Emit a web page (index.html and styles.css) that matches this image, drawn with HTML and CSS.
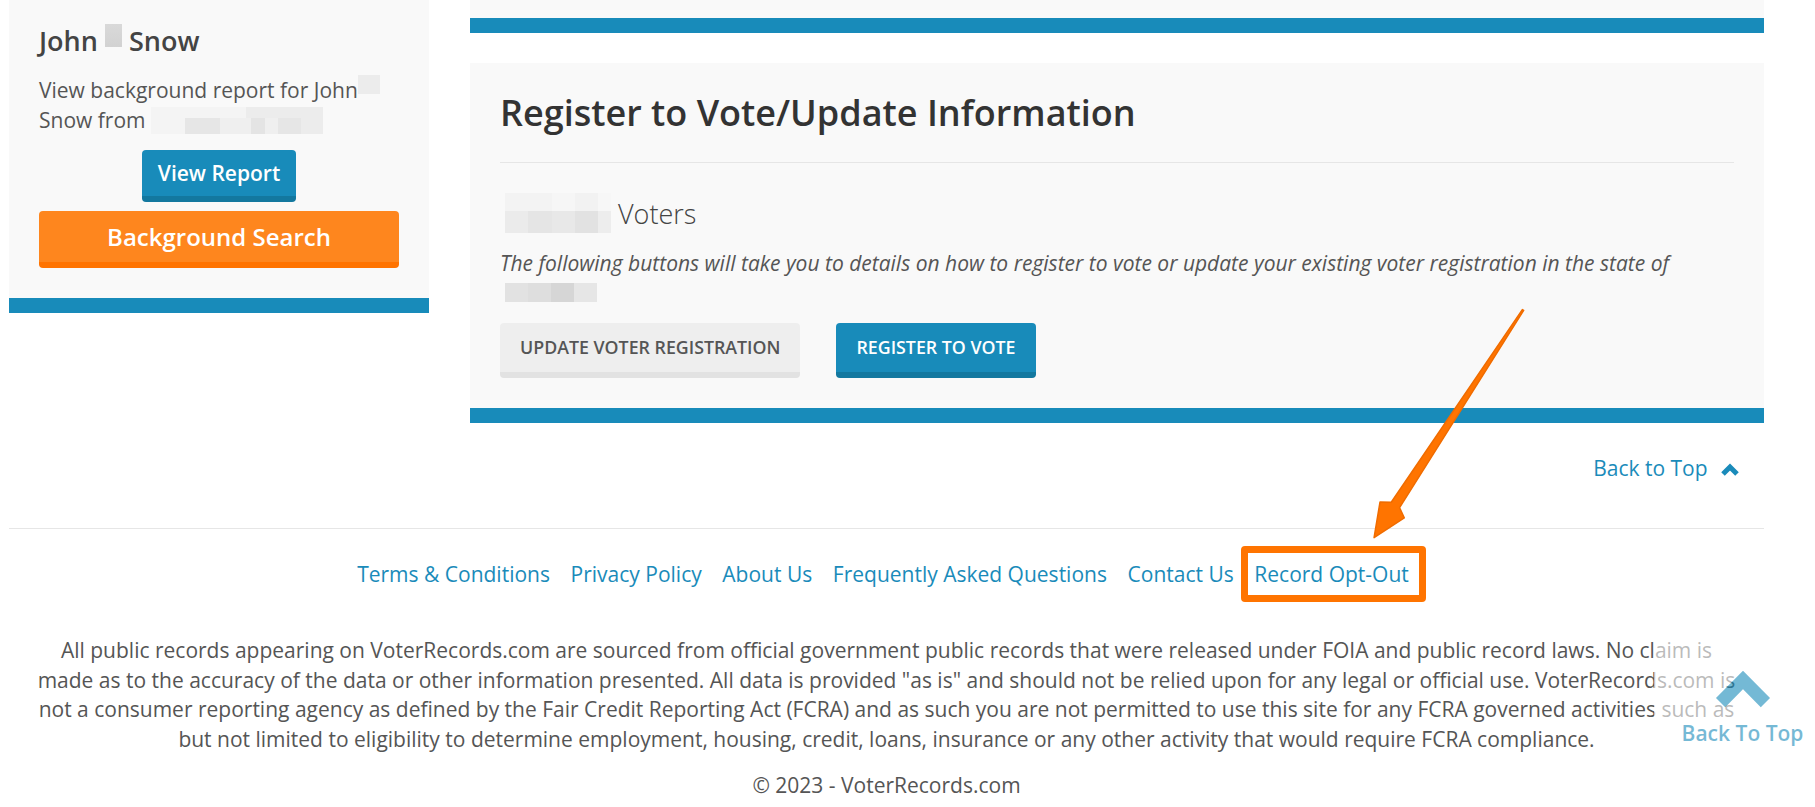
FILE: index.html
```html
<!DOCTYPE html>
<html lang="en">
<head>
  <meta charset="UTF-8">
  <meta name="viewport" content="width=device-width, initial-scale=1.0">
  <title>Register to Vote - VoterRecords.com</title>
  <link rel="stylesheet" href="styles.css">
</head>
<body>

  <div class="page">
    <aside class="side">
      <div class="card side-card">
        <h3 class="name">John <span class="blur blur-mid"></span> Snow</h3>
        <p class="lead">View background report for John<span class="blur blur-sm"></span> Snow from <span class="blur blur-city"></span></p>
        <div class="center"><a href="#" class="btn btn-blue btn-report">View Report</a></div>
        <a href="#" class="btn btn-orange btn-block">Background Search</a>
      </div>
    </aside>

    <main class="main">
      <div class="card card-tail"></div>

      <section class="card register">
        <h2>Register to Vote/Update Information</h2>
        <hr>
        <h4 class="state"><span class="blur blur-state"></span> Voters</h4>
        <p class="note">The following buttons will take you to details on how to register to vote or update your existing voter registration in the state of <span class="blur blur-state2"></span></p>
        <div class="actions">
          <a href="#" class="btn btn-gray">UPDATE VOTER REGISTRATION</a>
          <a href="#" class="btn btn-blue btn-caps">REGISTER TO VOTE</a>
        </div>
      </section>

      <div class="back-row">
        <a href="#" class="back-link">Back to Top
          <svg class="chev-sm" width="18" height="13" viewBox="0 0 18 13"><polyline points="2,11 9,4 16,11" fill="none" stroke="#1a8bba" stroke-width="5"/></svg>
        </a>
      </div>
    </main>
  </div>

  <footer class="footer">
    <ul class="links">
      <li><a href="#">Terms &amp; Conditions</a></li>
      <li><a href="#">Privacy Policy</a></li>
      <li><a href="#">About Us</a></li>
      <li><a href="#">Frequently Asked Questions</a></li>
      <li><a href="#">Contact Us</a></li>
      <li><a href="#" class="marked">Record Opt-Out</a></li>
    </ul>
    <p class="disclaimer">All public records appearing on VoterRecords.com are sourced from official government public records that were released under FOIA and public record laws. No claim is made as to the accuracy of the data or other information presented. All data is provided "as is" and should not be relied upon for any legal or official use. VoterRecords.com is not a consumer reporting agency as defined by the Fair Credit Reporting Act (FCRA) and as such you are not permitted to use this site for any FCRA governed activities such as but not limited to eligibility to determine employment, housing, credit, loans, insurance or any other activity that would require FCRA compliance.</p>
    <p class="copy">&copy; 2023 - VoterRecords.com</p>
  </footer>

  <!-- annotation arrow -->
  <svg class="arrow" width="1815" height="807" viewBox="0 0 1815 807">
    <g transform="translate(1523 310) rotate(123.2)">
      <polygon points="0,-0.8 233,-5 239,-14.5 272,0 239,14.5 233,5 0,0.8" fill="#ff7400" stroke="#f06c00" stroke-width="1.5" stroke-linejoin="round"/>
    </g>
  </svg>

  <a href="#" class="to-top">
    <svg width="60" height="40" viewBox="0 0 60 40"><polyline points="7.6,34.6 30,12 52.4,34.6" fill="none" stroke="#188bba" stroke-width="13"/></svg>
    <span>Back To Top</span>
  </a>

</body>
</html>
```

FILE: styles.css
```css
body {
  margin: 0;
  font-family: 'Open Sans', 'Liberation Sans', sans-serif;
  font-size: 21px;
  line-height: 30px;
  color: #555;
  background-color: #fff;
  position: relative;
}

a {
  color: #1a8bba;
  text-decoration: none;
}

.page {
  width: 1755px;
  margin-left: 9px;
  display: flex;
  gap: 41px;
  align-items: flex-start;
}

.side {
  width: 420px;
  flex: none;
}

.main {
  flex: 1;
}

.card {
  background-color: #f9f9f9;
  border-bottom: 15px solid #188bba;
}

.side-card {
  padding: 24px 30px 30px;
}

.name {
  font-size: 27px;
  font-weight: 600;
  line-height: 34px;
  color: #444;
  margin: 0 0 17px;
}

.lead {
  margin: 0 0 15px;
}

.center {
  text-align: center;
}

.blur {
  display: inline-block;
}

.blur-mid {
  width: 17px;
  height: 23px;
  background: linear-gradient(#d9d9d9, #d2d2d2);
  vertical-align: 4px;
}

.blur-sm {
  width: 22px;
  height: 19px;
  background-color: #ececec;
  vertical-align: 4px;
}

.blur-city {
  width: 172px;
  height: 27px;
  background:
    linear-gradient(90deg, transparent 0 20%, #e6e6e6 20% 40%, #efefef 40% 58%, #e4e4e4 58% 66%, #efefef 66% 74%, #e6e6e6 74% 87%, transparent 87%) bottom / 100% 60% no-repeat,
    linear-gradient(90deg, #f4f4f4 0 55%, #ececec 55% 100%);
  vertical-align: -6px;
}

.btn {
  display: inline-block;
  font-weight: 600;
  border-radius: 4px;
  border-bottom: 6px solid;
  text-align: center;
}

.btn-blue {
  background-color: #188bba;
  border-bottom-color: #13789f;
  color: #fff;
}

.btn-report {
  font-size: 21px;
  line-height: 28px;
  padding: 9px 16px;
}

.btn-orange {
  background-color: #fe861e;
  border-bottom-color: #ff7300;
  color: #fff;
}

.btn-block {
  display: block;
  margin-top: 9px;
  font-size: 24px;
  line-height: 33px;
  padding: 9px 16px;
}

.card-tail {
  height: 18px;
  margin-bottom: 30px;
}

.register {
  padding: 28px 30px 30px;
}

.register h2 {
  font-size: 36px;
  font-weight: 600;
  line-height: 43px;
  color: #333;
  margin: 0;
}

.register hr {
  border: 0;
  border-top: 1px solid #e6e6e6;
  margin: 28px 0 30px;
}

.state {
  font-size: 27px;
  font-weight: 300;
  line-height: 40px;
  color: #444;
  margin: 0 0 14px;
}

.blur-state {
  width: 106px;
  height: 40px;
  margin-left: 5px;
  background:
    linear-gradient(90deg, #ebebeb 0 22%, #e5e5e5 22% 44%, #e8e8e8 44% 66%, #e2e2e2 66% 88%, #ededed 88%) bottom / 100% 55% no-repeat,
    linear-gradient(90deg, #f3f3f3 0 44%, #f6f6f6 44% 66%, #f2f2f2 66% 88%, #f7f7f7 88%);
  vertical-align: -9px;
}

.note {
  font-style: italic;
  margin: 0 0 15px;
}

.blur-state2 {
  width: 92px;
  height: 19px;
  margin-left: 5px;
  background: linear-gradient(90deg, #e2e2e2 0 25%, #dedede 25% 50%, #d6d6d6 50% 75%, #e6e6e6 75%);
  vertical-align: -1px;
}

.actions {
  display: flex;
  gap: 36px;
}

.btn-gray,
.btn-caps {
  font-size: 17.8px;
  line-height: 25px;
  padding: 12px 20px;
}

.btn-gray {
  background-color: #eeeeee;
  border-bottom-color: #e2e2e2;
  color: #555;
}

.back-row {
  margin-top: 30px;
  padding-right: 25px;
  text-align: right;
}

.back-link .chev-sm {
  margin-left: 8px;
}

.footer {
  width: 1755px;
  margin: 45px 0 0 9px;
  border-top: 1px solid #e6e6e6;
  text-align: center;
}

.links {
  list-style: none;
  margin: 0;
  padding: 30px 7px 0 0;
  display: flex;
  justify-content: center;
  gap: 20.6px;
}

.marked {
  position: relative;
}

.marked::after {
  content: '';
  position: absolute;
  left: -13px;
  right: -17px;
  top: -14px;
  bottom: -14px;
  border: 7px solid #ff7400;
  border-radius: 4px;
}

.disclaimer {
  margin: 47px 25px 15.5px;
  line-height: 29.5px;
}

.copy {
  margin: 0;
}

.arrow {
  position: absolute;
  left: 0;
  top: 0;
  pointer-events: none;
}

.to-top {
  position: fixed;
  left: 1654px;
  top: 636px;
  width: 145px;
  height: 141px;
  padding-left: 16px;
  background-color: #fff;
  opacity: 0.6;
  display: flex;
  flex-direction: column;
  align-items: center;
  font-weight: 600;
  line-height: 24px;
}

.to-top svg {
  margin-top: 32px;
}

.to-top span {
  margin-top: 13px;
}
```
